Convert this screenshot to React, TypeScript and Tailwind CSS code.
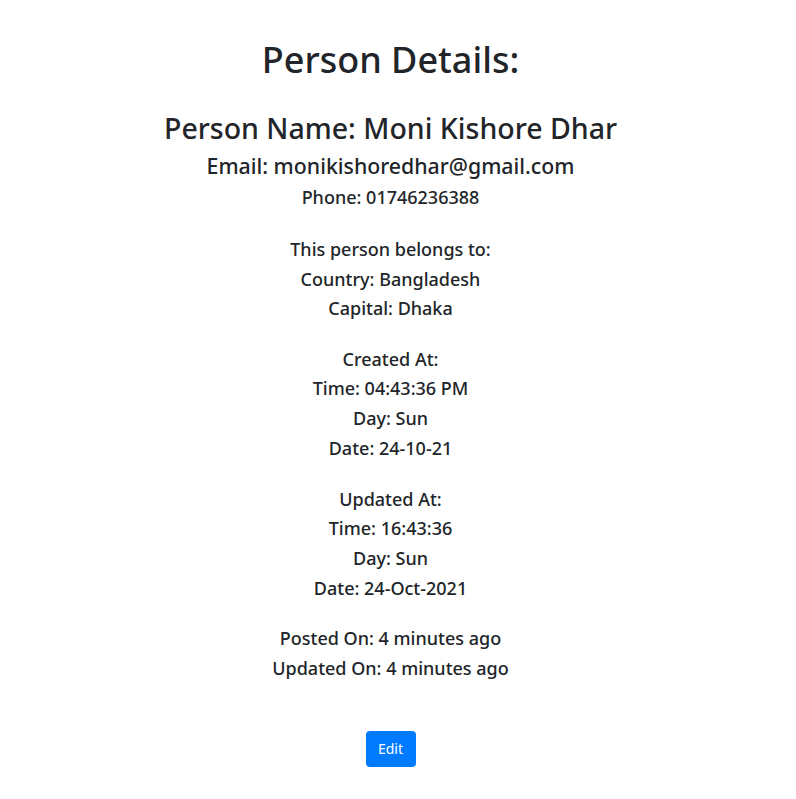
const person = {
  name: "Moni Kishore Dhar",
  email: "monikishoredhar@gmail.com",
  phone: "01746236388",
  country: "Bangladesh",
  capital: "Dhaka",
};

function Line({ children }: { children: React.ReactNode }) {
  return <div className="text-[18px] leading-[29.7px] font-medium">{children}</div>;
}

export default function App() {
  return (
    <div
      className="min-h-screen bg-white text-[#212529] pr-[15px] text-center"
      style={{ fontFamily: '"Noto Sans", "Open Sans", Arial, sans-serif' }}
    >
      <div className="flex flex-col items-center pt-[36px]">
        <h1 className="text-[36px] leading-[48px] font-medium">Person Details:</h1>
        <h2 className="mt-[26px] text-[28.5px] leading-[36px] font-medium">
          Person Name: {person.name}
        </h2>
        <h4 className="mt-[6px] text-[21.3px] leading-[28px] font-medium">Email: {person.email}</h4>
        <div className="mt-[5px] text-[18px] leading-[24px] font-medium">Phone: {person.phone}</div>

        <div className="mt-[26px]">
          <Line>This person belongs to:</Line>
          <Line>Country: {person.country}</Line>
          <Line>Capital: {person.capital}</Line>
        </div>

        <div className="mt-[20.6px]">
          <Line>Created At:</Line>
          <Line>Time: 04:43:36 PM</Line>
          <Line>Day: Sun</Line>
          <Line>Date: 24-10-21</Line>
        </div>

        <div className="mt-[21px]">
          <Line>Updated At:</Line>
          <Line>Time: 16:43:36</Line>
          <Line>Day: Sun</Line>
          <Line>Date: 24-Oct-2021</Line>
        </div>

        <div className="mt-[21px]">
          <Line>Posted On: 4 minutes ago</Line>
          <Line>Updated On: 4 minutes ago</Line>
        </div>

        <button className="mt-[47px] w-[50px] h-[36px] rounded-[4px] bg-[#007bff] text-white text-[14px]">
          Edit
        </button>
      </div>
    </div>
  );
}
